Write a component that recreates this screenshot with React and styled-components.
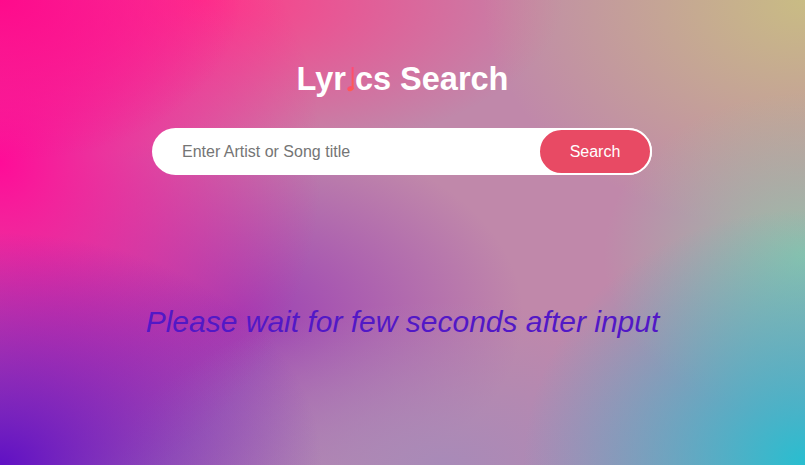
import React, { useState } from "react";
import styled, { createGlobalStyle } from "styled-components";

const GlobalStyle = createGlobalStyle`
  html, body {
    margin: 0;
    padding: 0;
  }
  body {
    font-family: "Liberation Sans", Arial, sans-serif;
  }
  * {
    box-sizing: border-box;
  }
`;

const Page = styled.div`
  min-height: 100vh;
  display: flex;
  flex-direction: column;
  align-items: center;
  padding-top: 60px;
  background:
    radial-gradient(ellipse 40% 50% at 0% 100%, #6010c4 0%, rgba(96, 16, 196, 0) 100%),
    radial-gradient(ellipse 35% 55% at 100% 100%, #28bed0 0%, rgba(40, 190, 208, 0) 100%),
    radial-gradient(ellipse 40% 35% at 55% 100%, #a88ab8 0%, rgba(168, 138, 184, 0) 100%),
    radial-gradient(ellipse 25% 35% at 100% 55%, #98c2a8 0%, rgba(152, 194, 168, 0) 100%),
    radial-gradient(ellipse 40% 50% at 100% 0%, #c9bc84 0%, rgba(201, 188, 132, 0) 100%),
    radial-gradient(ellipse 30% 35% at 0% 0%, #ff0a8c 0%, rgba(255, 10, 140, 0) 100%),
    radial-gradient(ellipse 40% 75% at 0% 35%, #ff0c98 0%, rgba(255, 12, 152, 0) 100%),
    radial-gradient(ellipse 45% 35% at 25% 0%, #ff3a88 0%, rgba(255, 58, 136, 0) 100%),
    radial-gradient(ellipse 35% 40% at 30% 68%, #9c40b4 0%, rgba(156, 64, 180, 0) 100%),
    #c088aa;
`;

const Title = styled.h1`
  margin: 0;
  font-size: 32.5px;
  line-height: 38px;
  font-weight: 700;
  color: #fff;
  display: flex;
  align-items: flex-end;
`;

const Note = styled.svg`
  width: 9px;
  height: 26px;
  margin-bottom: 6px;
`;

const SearchForm = styled.form`
  margin-top: 30px;
  margin-right: 1px;
  width: 500px;
  height: 47px;
  display: flex;
  background: #fff;
  border-radius: 30px;
`;

const SearchInput = styled.input`
  flex: 1;
  min-width: 0;
  border: none;
  outline: none;
  background: transparent;
  padding-left: 30px;
  font-family: "Liberation Sans", Arial, sans-serif;
  font-size: 16px;
  color: #333;
  &::placeholder {
    color: #757575;
  }
`;

const SearchButton = styled.button`
  width: 114px;
  height: 100%;
  border: 2px solid #fff;
  border-radius: 30px;
  background: #e84a64;
  color: #fff;
  font-family: "Liberation Sans", Arial, sans-serif;
  font-size: 16px;
  cursor: pointer;
`;

const Message = styled.p`
  margin: 129px 0 0;
  font-size: 30px;
  line-height: 36px;
  font-style: italic;
  color: #5218c6;
`;

function MusicNote() {
  return (
    <Note viewBox="0 0 9 26">
      <defs>
        <linearGradient id="noteFill" x1="0" y1="0" x2="0" y2="1">
          <stop offset="0" stopColor="#ff4a78" />
          <stop offset="1" stopColor="#ff5e48" />
        </linearGradient>
      </defs>
      <rect x="5.6" y="1" width="2" height="22" fill="url(#noteFill)" />
      <ellipse cx="4.4" cy="22.6" rx="3.2" ry="2.5" transform="rotate(-20 4.4 22.6)" fill="url(#noteFill)" />
    </Note>
  );
}

export default function App() {
  const [term, setTerm] = useState("");
  return (
    <Page>
      <GlobalStyle />
      <Title>
        Lyr<MusicNote />cs&nbsp;Search
      </Title>
      <SearchForm onSubmit={(e) => e.preventDefault()}>
        <SearchInput
          placeholder="Enter Artist or Song title"
          value={term}
          onChange={(e) => setTerm(e.target.value)}
        />
        <SearchButton type="submit">Search</SearchButton>
      </SearchForm>
      <Message>Please wait for few seconds after input</Message>
    </Page>
  );
}
